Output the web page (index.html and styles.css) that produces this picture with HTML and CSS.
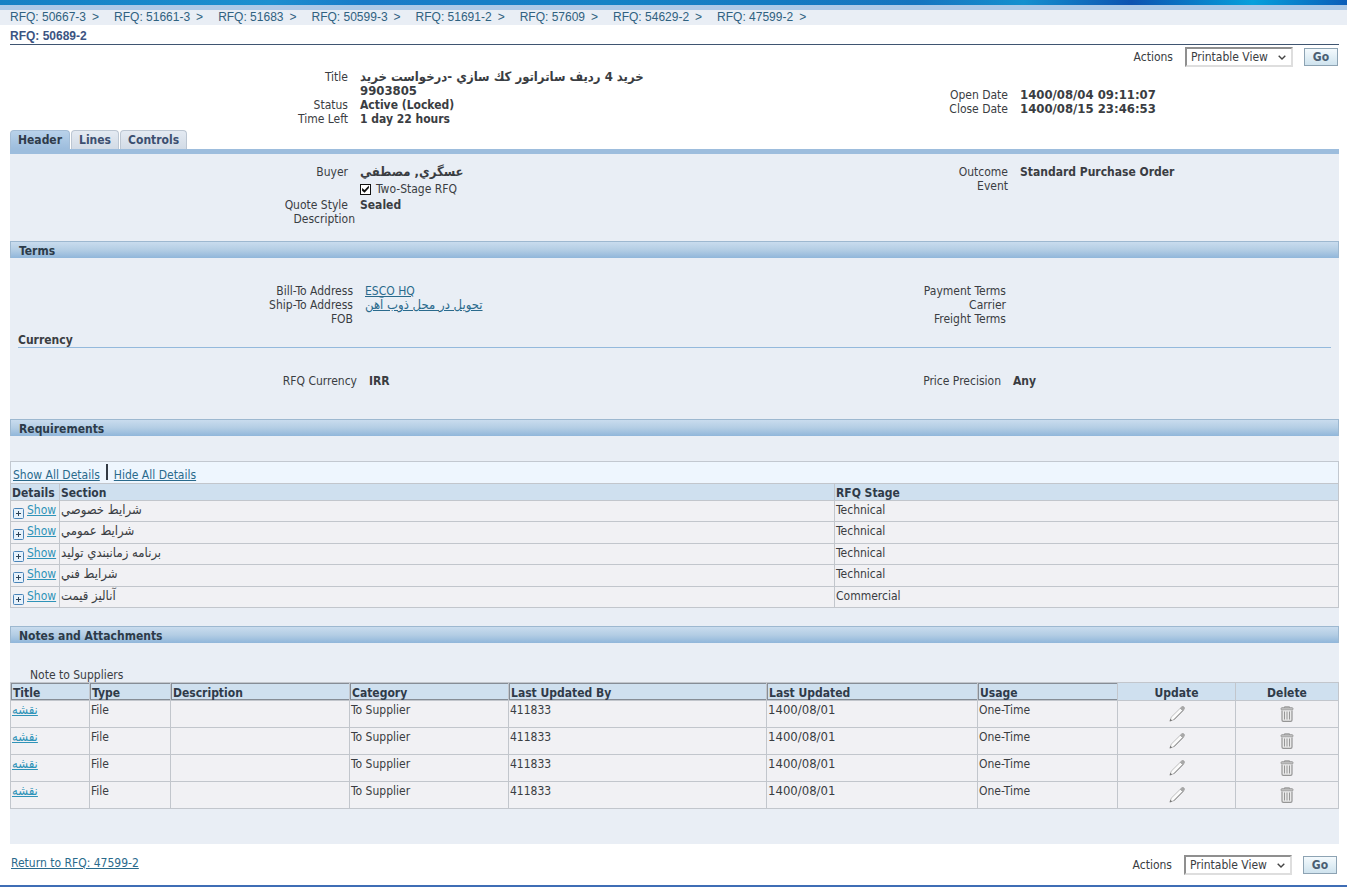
FILE: index.html
```html
<!DOCTYPE html>
<html lang="en">
<head>
<meta charset="utf-8">
<title>RFQ: 50689-2</title>
<link rel="stylesheet" href="styles.css">
</head>
<body>
<svg class="sprite" aria-hidden="true">
  <symbol id="plus" viewBox="0 0 11 11">
    <rect x=".5" y=".5" width="10" height="10" rx="1" fill="#e6f1fb" stroke="#4a84b8"/>
    <path d="M3 5.5h5M5.500 3v5" stroke="#2d4358" fill="none"/>
  </symbol>
  <symbol id="chevron" viewBox="0 0 8 5">
    <path d="M.7.700 4 4 7.300.7" stroke="#444" stroke-width="1.400" fill="none"/>
  </symbol>
  <symbol id="pencil" viewBox="0 0 16 16">
    <path d="M1 15 2.200 11.200 11.500 2 14 4.500 4.800 13.800Z" fill="#fbfbfb" stroke="#a8a8a8" stroke-width=".7"/>
    <path d="M4.800 13.800 14 4.500" stroke="#777" stroke-width=".9"/>
    <path d="M11.300 2.200 12.500 1a1.600 1.600 0 0 1 2.500 2.400L13.800 4.700Z" fill="#a9a9a9" stroke="#999" stroke-width=".6"/>
    <path d="M.6 15.400 1.400 12.800 3.200 14.600Z" fill="#777"/>
  </symbol>
  <symbol id="trash" viewBox="0 0 14 16">
    <path d="M4.500 2V.8h5V2" fill="none" stroke="#969696"/>
    <rect x="1" y="1.700" width="12" height="2.300" rx="1" fill="#c4c4c4" stroke="#969696" stroke-width=".9"/>
    <path d="M2 4.500V14q0 1.300 1.300 1.300h7.400Q12 15.300 12 14V4.500" fill="#e9e9e9" stroke="#969696" stroke-width="1.200"/>
    <path d="M4.500 5.500V13.500M7 5.500V13.500M9.500 5.500V13.500" stroke="#969696"/>
  </symbol>
</svg>

<div class="banner"></div>
<nav class="crumbs" aria-label="Breadcrumb">
  <span class="crumb"><a href="#">RFQ: 50667-3</a><span>&gt;</span></span>
  <span class="crumb"><a href="#">RFQ: 51661-3</a><span>&gt;</span></span>
  <span class="crumb"><a href="#">RFQ: 51683</a><span>&gt;</span></span>
  <span class="crumb"><a href="#">RFQ: 50599-3</a><span>&gt;</span></span>
  <span class="crumb"><a href="#">RFQ: 51691-2</a><span>&gt;</span></span>
  <span class="crumb"><a href="#">RFQ: 57609</a><span>&gt;</span></span>
  <span class="crumb"><a href="#">RFQ: 54629-2</a><span>&gt;</span></span>
  <span class="crumb"><a href="#">RFQ: 47599-2</a><span>&gt;</span></span>
</nav>

<div class="page">
  <h1 class="page-title">RFQ: 50689-2</h1>

  <form class="actions">
    <label for="actions-top">Actions</label>
    <span class="picker">
      <select id="actions-top"><option>Printable View</option></select>
      <svg class="picker-arrow"><use href="#chevron"/></svg>
    </span>
    <button class="go" type="button">Go</button>
  </form>

  <section class="pair summary">
    <dl class="fields">
      <dt>Title</dt><dd class="wide-text">خريد 4 رديف ساتراتور كك سازي -درخواست خريد<br>9903805</dd>
      <dt>Status</dt><dd>Active (Locked)</dd>
      <dt>Time Left</dt><dd>1 day 22 hours</dd>
    </dl>
    <dl class="fields fields-right">
      <dt>Open Date</dt><dd class="wide-text">1400/08/04 09:11:07</dd>
      <dt>Close Date</dt><dd class="wide-text">1400/08/15 23:46:53</dd>
    </dl>
  </section>

  <nav class="tabs" aria-label="Sections">
    <button class="tab tab-current" type="button">Header</button>
    <button class="tab" type="button">Lines</button>
    <button class="tab" type="button">Controls</button>
  </nav>

  <main class="panel">
    <section class="pair general">
      <dl class="fields">
        <dt>Buyer</dt><dd class="wide-text">عسگري, مصطفي</dd>
        <dd class="check-row"><input class="check" type="checkbox" id="two-stage" checked><label for="two-stage">Two-Stage RFQ</label></dd>
        <dt>Quote Style</dt><dd>Sealed</dd>
        <dt class="no-value">Description</dt><dd></dd>
      </dl>
      <dl class="fields fields-right">
        <dt>Outcome</dt><dd>Standard Purchase Order</dd>
        <dt>Event</dt><dd></dd>
      </dl>
    </section>

    <h2 class="bar">Terms</h2>
    <section class="pair terms">
      <dl class="fields">
        <dt>Bill-To Address</dt><dd><a href="#">ESCO HQ</a></dd>
        <dt>Ship-To Address</dt><dd class="wide-text"><a href="#">تحويل در محل ذوب آهن</a></dd>
        <dt>FOB</dt><dd></dd>
      </dl>
      <dl class="fields fields-right">
        <dt>Payment Terms</dt><dd></dd>
        <dt>Carrier</dt><dd></dd>
        <dt>Freight Terms</dt><dd></dd>
      </dl>
    </section>
    <h3 class="subhead">Currency</h3>
    <section class="pair currency">
      <dl class="fields"><dt>RFQ Currency</dt><dd>IRR</dd></dl>
      <dl class="fields fields-right"><dt>Price Precision</dt><dd>Any</dd></dl>
    </section>

    <h2 class="bar">Requirements</h2>
    <section class="requirements">
      <div class="toolbar"><a href="#">Show All Details</a><span class="divider"></span><a href="#">Hide All Details</a></div>
      <table class="grid req-grid">
        <colgroup><col class="c-details"><col class="c-section"><col class="c-stage"></colgroup>
        <thead><tr><th>Details</th><th>Section</th><th>RFQ Stage</th></tr></thead>
        <tbody>
          <tr><td><svg class="plus"><use href="#plus"/></svg><a href="#">Show</a></td><td class="wide-text">شرايط خصوصي</td><td>Technical</td></tr>
          <tr><td><svg class="plus"><use href="#plus"/></svg><a href="#">Show</a></td><td class="wide-text">شرايط عمومي</td><td>Technical</td></tr>
          <tr><td><svg class="plus"><use href="#plus"/></svg><a href="#">Show</a></td><td class="wide-text">برنامه زمانبندي توليد</td><td>Technical</td></tr>
          <tr><td><svg class="plus"><use href="#plus"/></svg><a href="#">Show</a></td><td class="wide-text">شرايط فني</td><td>Technical</td></tr>
          <tr><td><svg class="plus"><use href="#plus"/></svg><a href="#">Show</a></td><td class="wide-text">آناليز قيمت</td><td>Commercial</td></tr>
        </tbody>
      </table>
    </section>

    <h2 class="bar">Notes and Attachments</h2>
    <section class="notes">
      <p class="note-label">Note to Suppliers</p>
      <table class="grid notes-grid">
        <colgroup><col class="c-title"><col class="c-type"><col class="c-desc"><col class="c-cat"><col class="c-by"><col class="c-date"><col class="c-usage"><col class="c-update"><col class="c-delete"></colgroup>
        <thead><tr><th class="sortable">Title</th><th class="sortable">Type</th><th class="sortable">Description</th><th class="sortable">Category</th><th class="sortable">Last Updated By</th><th class="sortable">Last Updated</th><th class="sortable">Usage</th><th class="icon-cell">Update</th><th class="icon-cell">Delete</th></tr></thead>
        <tbody>
          <tr><td class="wide-text"><a href="#">نقشه</a></td><td>File</td><td></td><td>To Supplier</td><td>411833</td><td class="wide-text">1400/08/01</td><td>One-Time</td><td class="icon-cell"><svg class="pencil"><use href="#pencil"/></svg></td><td class="icon-cell"><svg class="trash"><use href="#trash"/></svg></td></tr>
          <tr><td class="wide-text"><a href="#">نقشه</a></td><td>File</td><td></td><td>To Supplier</td><td>411833</td><td class="wide-text">1400/08/01</td><td>One-Time</td><td class="icon-cell"><svg class="pencil"><use href="#pencil"/></svg></td><td class="icon-cell"><svg class="trash"><use href="#trash"/></svg></td></tr>
          <tr><td class="wide-text"><a href="#">نقشه</a></td><td>File</td><td></td><td>To Supplier</td><td>411833</td><td class="wide-text">1400/08/01</td><td>One-Time</td><td class="icon-cell"><svg class="pencil"><use href="#pencil"/></svg></td><td class="icon-cell"><svg class="trash"><use href="#trash"/></svg></td></tr>
          <tr><td class="wide-text"><a href="#">نقشه</a></td><td>File</td><td></td><td>To Supplier</td><td>411833</td><td class="wide-text">1400/08/01</td><td>One-Time</td><td class="icon-cell"><svg class="pencil"><use href="#pencil"/></svg></td><td class="icon-cell"><svg class="trash"><use href="#trash"/></svg></td></tr>
        </tbody>
      </table>
    </section>
  </main>

  <footer class="footer">
    <a href="#">Return to RFQ: 47599-2</a>
    <form class="actions">
      <label for="actions-bottom">Actions</label>
      <span class="picker">
        <select id="actions-bottom"><option>Printable View</option></select>
        <svg class="picker-arrow"><use href="#chevron"/></svg>
      </span>
      <button class="go" type="button">Go</button>
    </form>
  </footer>
</div>
<div class="base-line"></div>
</body>
</html>
```

FILE: styles.css
```css
* { box-sizing: border-box; }

body {
  margin: 0;
  background: #fff;
  color: #3a3d42;
  font: 12px/14px "DejaVu Sans Condensed", "DejaVu Sans", sans-serif;
}

h1, h2, h3, p, dl, dd { margin: 0; }
a { color: #2a6a8c; }
.sprite { display: none; }

.banner {
  height: 10px;
  border-bottom: 5px solid #adc9e7;
  background: linear-gradient(90deg, #1580c4, #1b8fd0 20%, #1a7bc8 27%, #1683c6 45%, #1474bf 68%, #1590cf 76%, #0c52b0 84%, #06a0dc 93%, #0a5cb8);
}

.crumbs {
  display: flex;
  gap: 15px;
  padding: 0 10px;
  background: #e9eef5;
  font: 12px/15px "Liberation Sans", Arial, sans-serif;
  color: #2f6180;
}
.crumb { display: flex; gap: 6px; }
.crumbs a { color: #2f6180; text-decoration: none; }

.page { padding: 0 8px 0 10px; }

.page-title {
  padding: 4px 0 1px;
  border-bottom: 1px solid #3f5571;
  color: #3c5482;
  font: bold 12px/14px "Liberation Sans", Arial, sans-serif;
}

.actions {
  display: flex;
  justify-content: flex-end;
  align-items: center;
  padding: 2px 1px 0 0;
}
.picker { position: relative; margin: 0 11px 0 12px; }
.picker select {
  display: block;
  appearance: none;
  width: 108px;
  height: 20px;
  padding: 0 4px;
  border: 2px solid;
  border-color: #8f8f8f #dedede #dedede #8f8f8f;
  border-radius: 0;
  background: #fff;
  color: #3a3d42;
  font: inherit;
}
.picker-arrow {
  position: absolute;
  right: 7px;
  top: 8px;
  width: 8px;
  height: 5px;
  pointer-events: none;
}
.go {
  width: 34px;
  height: 18px;
  padding: 0;
  border: 1px solid #8da3b3;
  background: linear-gradient(#f4fafd, #cfe3ee);
  color: #4b5f73;
  font: inherit;
  font-weight: bold;
}

/* Two side-by-side groups of label/value rows */
.pair { display: grid; grid-template-columns: 650fr 679fr; align-items: start; }
.fields { display: grid; grid-template-columns: 350fr 300fr; }
.fields-right { grid-template-columns: 360fr 319fr; }
.fields dt { grid-column: 1; padding-right: 12px; text-align: right; }
.fields dd { grid-column: 2; min-height: 14px; font-weight: bold; white-space: nowrap; }
.fields dd a { font-weight: normal; }
.fields dt.no-value { padding-right: 5px; }

/* Persian text and dates are set one size up */
.wide-text { font-size: 13px; }

.summary { padding-top: 3px; }
.summary .fields-right { padding-top: 18px; }

.tabs {
  display: flex;
  gap: 1px;
  margin-top: 4px;
  border-bottom: 5px solid #9dbddd;
}
.tab {
  height: 19px;
  padding: 0 7px;
  border: 1px solid #bcc6d2;
  border-bottom: 0;
  border-radius: 4px 4px 0 0;
  background: linear-gradient(#e4eaf2, #d2dbe6);
  color: #3c4f70;
  font: inherit;
  font-weight: bold;
}
.tab-current {
  border-color: #a4bdd6;
  background: linear-gradient(#b9d2ea, #9dbddd);
  color: #2f3b4a;
}

.panel { padding-bottom: 35px; background: #e9eef5; }
.general { padding: 11px 0 15px; }
.fields dd.check-row {
  display: flex;
  align-items: center;
  gap: 5px;
  padding: 3px 0 2px;
  font-weight: normal;
}
.check {
  appearance: none;
  width: 11px;
  height: 11px;
  margin: 0;
  border: 1px solid #111;
  background: #fff;
}
.check:checked::before {
  content: "";
  display: block;
  width: 9px;
  height: 9px;
  background: #111;
  clip-path: polygon(12% 40%, 40% 60%, 88% 10%, 88% 40%, 40% 92%, 12% 70%);
}

.bar {
  height: 17px;
  padding: 2px 8px 0;
  border: 1px solid #9db8d0;
  border-bottom: 0;
  background: linear-gradient(#c9dcee, #b3cde4 50%, #90b6da);
  color: #2c3b49;
  font-size: 12px;
  line-height: 14px;
}

.terms { padding: 26px 0 8px; }
.terms .fields { grid-template-columns: 355fr 295fr; }
.terms .fields-right { grid-template-columns: 358fr 321fr; }
.subhead {
  margin: 0 8px;
  border-bottom: 1px solid #94b9dc;
  font-size: 12px;
  line-height: 13px;
}
.currency { padding: 26px 0 31px; }
.currency .fields { grid-template-columns: 359fr 291fr; }
.currency .fields-right { grid-template-columns: 353fr 326fr; }

.requirements { padding: 25px 0 18px; }
.toolbar {
  display: flex;
  align-items: flex-end;
  gap: 6px;
  height: 22px;
  padding: 0 2px 1px;
  border: 1px solid #c2c8d0;
  border-bottom: 0;
  background: #eef6fe;
}
.divider { width: 2px; height: 16px; margin-bottom: 2px; background: #333a44; }

.grid {
  width: 100%;
  table-layout: fixed;
  border-collapse: collapse;
  background: #f1f1f4;
}
.grid th, .grid td {
  padding: 0 1px;
  border: 1px solid #c2c6cc;
  text-align: left;
  vertical-align: top;
  white-space: nowrap;
}
.grid th { background: #cfe0ef; color: #2f3b49; }
.grid a { color: #2f93b8; }

.req-grid th { height: 17px; padding-top: 2px; }
.req-grid td { height: 21px; padding-top: 2px; }
.req-grid tr:nth-child(even) td { height: 22px; }
.req-grid td:first-child { padding-left: 2px; }
.c-details { width: 49px; }
.c-section { width: 775px; }
.c-stage { width: 504px; }
.plus { width: 11px; height: 11px; margin-right: 3px; vertical-align: -5px; }

.notes { padding-top: 26px; }
.note-label { padding-left: 20px; line-height: 13px; }
.notes-grid th { height: 18px; padding: 3px 2px 0; }
.notes-grid th.sortable { box-shadow: inset 1px 1px 0 #868d96, inset 0 -1px 0 #868d96, 1px 0 0 #868d96; }
.notes-grid td { height: 27px; padding-top: 2px; }
.grid .icon-cell { text-align: center; }
.grid td.icon-cell { padding-top: 5px; }
.c-title { width: 79px; }
.c-type { width: 81px; }
.c-desc { width: 179px; }
.c-cat { width: 159px; }
.c-by { width: 258px; }
.c-date { width: 211px; }
.c-usage { width: 140px; }
.c-update { width: 118px; }
.c-delete { width: 103px; }
.pencil { display: block; width: 16px; height: 16px; margin: 0 auto; }
.trash { display: block; width: 14px; height: 16px; margin: 0 auto; }

.footer {
  display: flex;
  justify-content: space-between;
  align-items: flex-start;
  padding: 9px 1px 10px;
}
.footer > a { padding-top: 3px; }
.base-line { height: 2px; background: #3f6db5; }
```
